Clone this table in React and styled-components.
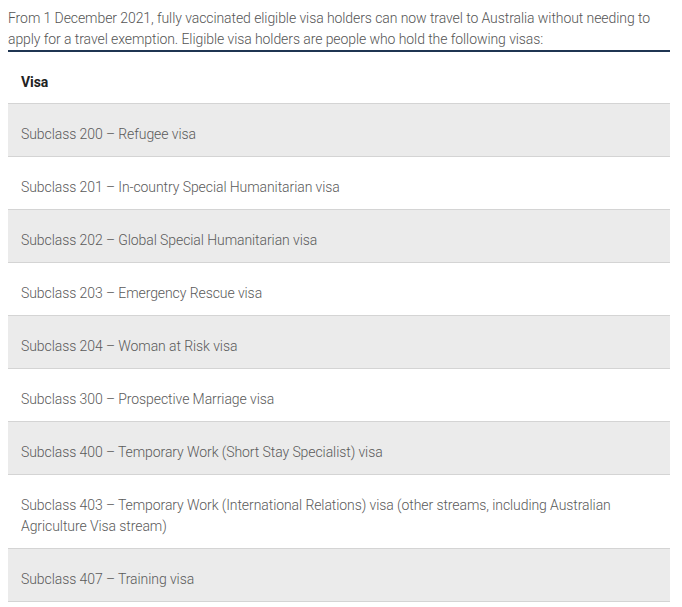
import React from "react";
import styled, { createGlobalStyle } from "styled-components";

const GlobalStyle = createGlobalStyle`
  body {
    margin: 0;
    background: #ffffff;
    font-family: Roboto, "Noto Sans", sans-serif;
  }
`;

const Page = styled.div`
  width: 662px;
  padding: 8px 12px 0 8px;
`;

const Intro = styled.p`
  margin: 0;
  font-size: 14px;
  font-weight: 300;
  line-height: 21px;
  color: #555555;
  letter-spacing: -0.08px;
`;

const Table = styled.table`
  width: 100%;
  border-collapse: collapse;
  border-top: 2px solid #1f3552;
  font-size: 14px;
  line-height: 21px;
  letter-spacing: -0.08px;
`;

const HeadCell = styled.th`
  text-align: left;
  padding: 20px 13px 10px;
  font-weight: 700;
  color: #222222;
  background: #ffffff;
  border-bottom: 1px solid #d4d4d4;
`;

const Row = styled.tr`
  background: ${(props) => (props.$shaded ? "#ebebeb" : "#ffffff")};
`;

const Cell = styled.td`
  padding: 20px 13px 11px;
  font-weight: 300;
  color: #5a5a5a;
  border-bottom: 1px solid #d4d4d4;
`;

const visas = [
  "Subclass 200 – Refugee visa",
  "Subclass 201 – In-country Special Humanitarian visa",
  "Subclass 202 – Global Special Humanitarian visa",
  "Subclass 203 – Emergency Rescue visa",
  "Subclass 204 – Woman at Risk visa",
  "Subclass 300 – Prospective Marriage visa",
  "Subclass 400 – Temporary Work (Short Stay Specialist) visa",
  "Subclass 403 – Temporary Work (International Relations) visa (other streams, including Australian Agriculture Visa stream)",
  "Subclass 407 – Training visa",
];

export default function App() {
  return (
    <Page>
      <GlobalStyle />
      <Intro>
        From 1 December 2021, fully vaccinated eligible visa holders can now
        travel to Australia without needing to apply for a travel exemption.
        Eligible visa holders are people who hold the following visas:
      </Intro>
      <Table>
        <thead>
          <tr>
            <HeadCell>Visa</HeadCell>
          </tr>
        </thead>
        <tbody>
          {visas.map((visa, i) => (
            <Row key={visa} $shaded={i % 2 === 0}>
              <Cell>{visa}</Cell>
            </Row>
          ))}
        </tbody>
      </Table>
    </Page>
  );
}
